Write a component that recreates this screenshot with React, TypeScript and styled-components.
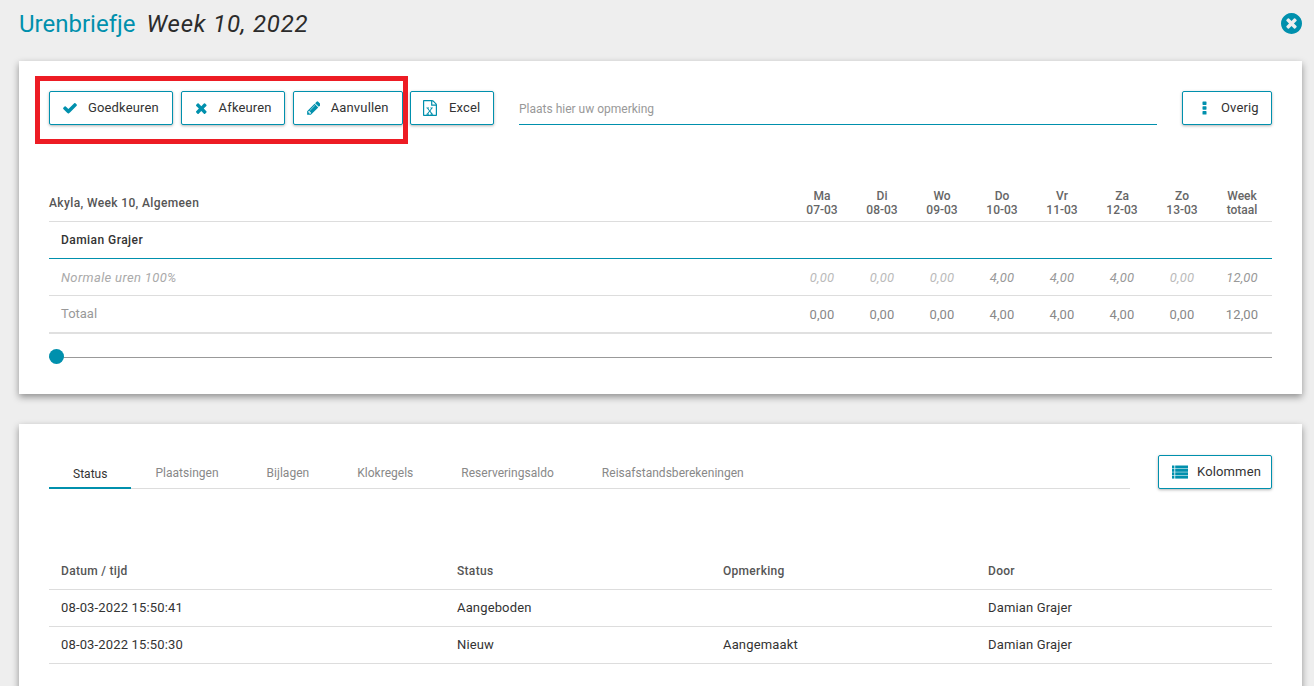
import React from "react";
import styled, { createGlobalStyle } from "styled-components";

const teal = "#0090ad";

const Global = createGlobalStyle`
  html, body { margin: 0; padding: 0; height: 686px; overflow: hidden; background: #eeeeee; }
  body { font-family: Roboto, "Liberation Sans", sans-serif; font-size: 12px; color: #333; }
  * { box-sizing: border-box; }
`;

const Page = styled.div`
  padding: 0 12px 0 19px;
  height: 686px;
  overflow: hidden;
`;

const Header = styled.header`
  height: 61px;
  display: flex;
  align-items: center;
  justify-content: space-between;
  padding: 0 0 13px;
`;

const Title = styled.h1`
  margin: 0;
  font-size: 24px;
  font-weight: 400;
  color: ${teal};
  display: flex;
  gap: 11px;
`;

const Subtitle = styled.em`
  color: #2b2b2b;
  font-style: italic;
  letter-spacing: 0.8px;
`;

const CloseIcon = styled.svg`
  width: 21px;
  height: 21px;
  color: ${teal};
  fill: currentColor;
  margin-top: -1px;
`;

const Card = styled.section<{ $height: number; $pad: string }>`
  width: 1283px;
  height: ${(p) => p.$height}px;
  padding: ${(p) => p.$pad};
  background: #fff;
  box-shadow: 0 3px 7px rgba(0, 0, 0, 0.4);
  margin-bottom: 30px;
`;

const Toolbar = styled.div`
  position: relative;
  display: flex;
  align-items: flex-start;
`;

const Button = styled.button<{ $w: number; $gap: number; $mr?: number; $pl?: number }>`
  width: ${(p) => p.$w}px;
  height: 34px;
  margin-right: ${(p) => p.$mr ?? 8}px;
  flex: none;
  display: flex;
  align-items: center;
  padding: 0 0 2px ${(p) => p.$pl ?? 12}px;
  gap: ${(p) => p.$gap}px;
  background: #fff;
  border: 1px solid ${teal};
  border-radius: 2px;
  box-shadow: 0 1px 3px rgba(0, 0, 0, 0.3);
  font: 400 13px Roboto, sans-serif;
  letter-spacing: 0.15px;
  color: #333;
`;

const Icon = styled.svg<{ $w: number; $h?: number }>`
  width: ${(p) => p.$w}px;
  height: ${(p) => p.$h ?? 16}px;
  flex: none;
  fill: ${teal};
  margin-top: 2px;
`;

const Comment = styled.div`
  flex: 1;
  height: 34px;
  margin: 0 25px 0 25px;
  border-bottom: 1px solid ${teal};
  color: #999;
  font-size: 12px;
  padding-top: 11px;
`;

const Highlight = styled.div`
  position: absolute;
  left: -14px;
  top: -15px;
  width: 373px;
  height: 68px;
  border: 5px solid #ed1c24;
  pointer-events: none;
`;

const Hours = styled.div`
  margin-top: 63px;
`;

const HourRow = styled.div<{ $h: number; $line: string; $lw?: number; $pb?: number }>`
  display: grid;
  grid-template-columns: 1fr repeat(8, 60px);
  align-items: center;
  height: ${(p) => p.$h}px;
  padding-bottom: ${(p) => p.$pb ?? 0}px;
  border-bottom: ${(p) => p.$lw ?? 1}px solid ${(p) => p.$line};
`;

const RowLabel = styled.div<{ $color: string; $weight?: number; $italic?: boolean; $pad?: number; $size?: number; $ls?: number; $pb?: number }>`
  padding: 0 0 ${(p) => p.$pb ?? 0}px ${(p) => p.$pad ?? 12}px;
  color: ${(p) => p.$color};
  font-weight: ${(p) => p.$weight ?? 400};
  font-size: ${(p) => p.$size ?? 12}px;
  letter-spacing: ${(p) => p.$ls ?? 0}px;
  font-style: ${(p) => (p.$italic ? "italic" : "normal")};
`;

const DayHead = styled.div`
  text-align: center;
  font-weight: 500;
  font-size: 12px;
  line-height: 14px;
  color: #666;
`;

const Value = styled.div<{ $color: string; $italic?: boolean }>`
  text-align: center;
  font-size: 13px;
  letter-spacing: 0.15px;
  color: ${(p) => p.$color};
  font-style: ${(p) => (p.$italic ? "italic" : "normal")};
`;

const SliderTrack = styled.div`
  position: relative;
  height: 1px;
  margin-top: 23px;
  background: #999;
`;

const SliderKnob = styled.div`
  position: absolute;
  left: 0;
  top: -8px;
  width: 15px;
  height: 15px;
  border-radius: 50%;
  background: ${teal};
`;

const TabHeader = styled.div`
  display: flex;
  justify-content: space-between;
  align-items: flex-start;
`;

const Tabs = styled.nav`
  width: 1081px;
  height: 34px;
  display: flex;
  border-bottom: 1px solid #ddd;
`;

const Tab = styled.div<{ $active?: boolean }>`
  height: 34px;
  padding: ${(p) => (p.$active ? 12 : 11)}px 24px 0;
  font-size: 12px;
  letter-spacing: 0.02px;
  color: ${(p) => (p.$active ? "#333" : "#888")};
  border-bottom: 2px solid ${(p) => (p.$active ? teal : "transparent")};
`;

const StatusTable = styled.div`
  margin-top: 64px;
`;

const StatusRow = styled.div<{ $h: number }>`
  display: grid;
  grid-template-columns: 396px 266px 265px 1fr;
  align-items: center;
  height: ${(p) => p.$h}px;
  border-bottom: 1px solid #ddd;
`;

const StatusCell = styled.div<{ $head?: boolean }>`
  padding: 0 0 ${(p) => (p.$head ? 0 : 2)}px 12px;
  font-size: ${(p) => (p.$head ? 12 : 13)}px;
  letter-spacing: ${(p) => (p.$head ? 0.3 : 0.15)}px;
  font-weight: ${(p) => (p.$head ? 500 : 400)};
  color: ${(p) => (p.$head ? "#555" : "#333")};
`;

const days = [
  ["Ma", "07-03"], ["Di", "08-03"], ["Wo", "09-03"], ["Do", "10-03"],
  ["Vr", "11-03"], ["Za", "12-03"], ["Zo", "13-03"], ["Week", "totaal"],
];
const vals = ["0,00", "0,00", "0,00", "4,00", "4,00", "4,00", "0,00", "12,00"];
const tabs = ["Plaatsingen", "Bijlagen", "Klokregels", "Reserveringsaldo", "Reisafstandsberekeningen"];
const statusRows = [
  ["08-03-2022 15:50:41", "Aangeboden", "", "Damian Grajer"],
  ["08-03-2022 15:50:30", "Nieuw", "Aangemaakt", "Damian Grajer"],
];

const CheckIcon = () => (
  <Icon $w={16} viewBox="0 0 1792 1792">
    <path d="M1671 566q0 40-28 68l-724 724-136 136q-28 28-68 28t-68-28l-136-136-362-362q-28-28-28-68t28-68l136-136q28-28 68-28t68 28l294 295 656-657q28-28 68-28t68 28l136 136q28 28 28 68z" />
  </Icon>
);
const TimesIcon = () => (
  <Icon $w={12.6} viewBox="0 0 1408 1792">
    <path d="M1298 1322q0 40-28 68l-136 136q-28 28-68 28t-68-28l-294-294-294 294q-28 28-68 28t-68-28l-136-136q-28-28-28-68t28-68l294-294-294-294q-28-28-28-68t28-68l136-136q28-28 68-28t68 28l294 294 294-294q28-28 68-28t68 28l136 136q28 28 28 68t-28 68l-294 294 294 294q28 28 28 68z" />
  </Icon>
);
const PencilIcon = () => (
  <Icon $w={13.7} viewBox="0 0 1536 1792">
    <path d="M491 1536l91-91-235-235-91 91v107h128v128h107zm523-928q0-22-22-22-10 0-17 7l-542 542q-7 7-7 17 0 22 22 22 10 0 17-7l542-542q7-7 7-17zm-54-192l416 416-832 832h-416v-416zm683 96q0 53-37 90l-166 166-416-416 166-165q36-38 90-38 53 0 91 38l235 234q37 39 37 91z" />
  </Icon>
);
const ExcelIcon = () => (
  <Icon $w={14} $h={16} viewBox="0 0 14 16">
    <path d="M13.4 3.5c.25.25.6.9.6 1.45V15c0 .55-.45 1-1 1H1c-.55 0-1-.45-1-1V1c0-.55.45-1 1-1h8c.55 0 1.2.35 1.45.6zM9.3 1.2v3.4h3.4c-.1-.25-.2-.4-.3-.5L9.8 1.5c-.1-.1-.25-.2-.5-.3zM12.8 14.8V5.8H8.6c-.35 0-.5-.15-.5-.5V1.2H1.2v13.6z" />
    <path d="M3.4 7.4h2.6v.9h-.7l1.4 2.2 1.4-2.2h-.7v-.9h2.5v.9h-.6L7.4 11l2.1 2.8h.6v.9H7.5v-.9h.7L6.7 11.7l-1.5 2.1h.7v.9H3.4v-.9h.6L6.1 11 4 8.3h-.6z" />
  </Icon>
);
const DotsIcon = () => (
  <Icon $w={5} viewBox="0 0 5 16">
    <rect x="0.5" y="1.5" width="4" height="3.4" rx="0.6" />
    <rect x="0.5" y="6.3" width="4" height="3.4" rx="0.6" />
    <rect x="0.5" y="11.1" width="4" height="3.4" rx="0.6" />
  </Icon>
);
const ListIcon = () => (
  <Icon $w={16} viewBox="0 0 16 16">
    {[1.5, 4.9, 8.3, 11.7].map((y) => (
      <g key={y}>
        <rect x="0" y={y} width="2.4" height="2.9" />
        <rect x="3.2" y={y} width="12.8" height="2.9" />
      </g>
    ))}
  </Icon>
);

export default function App() {
  return (
    <Page>
      <Global />
      <Header>
        <Title>Urenbriefje <Subtitle>Week 10, 2022</Subtitle></Title>
        <CloseIcon viewBox="0 0 1536 1536">
          <path d="M1149 1122q0-26-19-45l-181-181 181-181q19-19 19-45 0-27-19-46l-90-90q-19-19-46-19-26 0-45 19l-181 181-181-181q-19-19-45-19-27 0-46 19l-90 90q-19 19-19 46 0 26 19 45l181 181-181 181q-19 19-19 45 0 27 19 46l90 90q19 19 46 19 26 0 45-19l181-181 181 181q19 19 45 19 27 0 46-19l90-90q19-19 19-46zm387-226q0 209-103 385.5t-279.5 279.5-385.5 103-385.5-103-279.5-279.5-103-385.5 103-385.5 279.5-279.5 385.5-103 385.5 103 279.5 279.5 103 385.5z" transform="translate(0 -128)" />
        </CloseIcon>
      </Header>

      <Card $height={333} $pad="30px">
        <Toolbar>
          <Button $w={124} $gap={10}><CheckIcon />Goedkeuren</Button>
          <Button $w={104} $gap={11} $pl={13}><TimesIcon />Afkeuren</Button>
          <Button $w={110} $gap={11} $mr={7}><PencilIcon />Aanvullen</Button>
          <Button $w={84} $gap={12} $mr={0}><ExcelIcon />Excel</Button>
          <Comment>Plaats hier uw opmerking</Comment>
          <Button $w={90} $gap={14} $mr={0} $pl={19}><DotsIcon />Overig</Button>
          <Highlight />
        </Toolbar>
        <Hours>
          <HourRow $h={34} $pb={4} $line="#ddd">
            <RowLabel $color="#555" $weight={500} $pad={0} $ls={0.37}>Akyla, Week 10, Algemeen</RowLabel>
            {days.map((d) => <DayHead key={d[0]}>{d[0]}<br />{d[1]}</DayHead>)}
          </HourRow>
          <HourRow $h={37} $line={teal}>
            <RowLabel $color="#333" $weight={500} $ls={0.45}>Damian Grajer</RowLabel>
          </HourRow>
          <HourRow $h={37} $line="#ddd">
            <RowLabel $color="#aaa" $italic $size={13} $ls={0.35}>Normale uren 100%</RowLabel>
            {vals.map((v, i) => <Value key={i} $italic $color={v === "0,00" ? "#bbb" : "#999"}>{v}</Value>)}
          </HourRow>
          <HourRow $h={38} $line="#e0e0e0" $lw={2}>
            <RowLabel $color="#999" $size={13} $pb={2}>Totaal</RowLabel>
            {vals.map((v, i) => <Value key={i} $color="#888">{v}</Value>)}
          </HourRow>
        </Hours>
        <SliderTrack><SliderKnob /></SliderTrack>
      </Card>

      <Card $height={300} $pad="31px 30px 0">
        <TabHeader>
          <Tabs>
            <Tab $active>Status</Tab>
            {tabs.map((t) => <Tab key={t}>{t}</Tab>)}
          </Tabs>
          <Button $w={114} $gap={9} $mr={0} $pl={13}><ListIcon />Kolommen</Button>
        </TabHeader>
        <StatusTable>
          <StatusRow $h={37}>
            <StatusCell $head>Datum / tijd</StatusCell>
            <StatusCell $head>Status</StatusCell>
            <StatusCell $head>Opmerking</StatusCell>
            <StatusCell $head>Door</StatusCell>
          </StatusRow>
          {statusRows.map((r) => (
            <StatusRow $h={37} key={r[0]}>
              {r.map((c, i) => <StatusCell key={i}>{c}</StatusCell>)}
            </StatusRow>
          ))}
        </StatusTable>
      </Card>
    </Page>
  );
}
